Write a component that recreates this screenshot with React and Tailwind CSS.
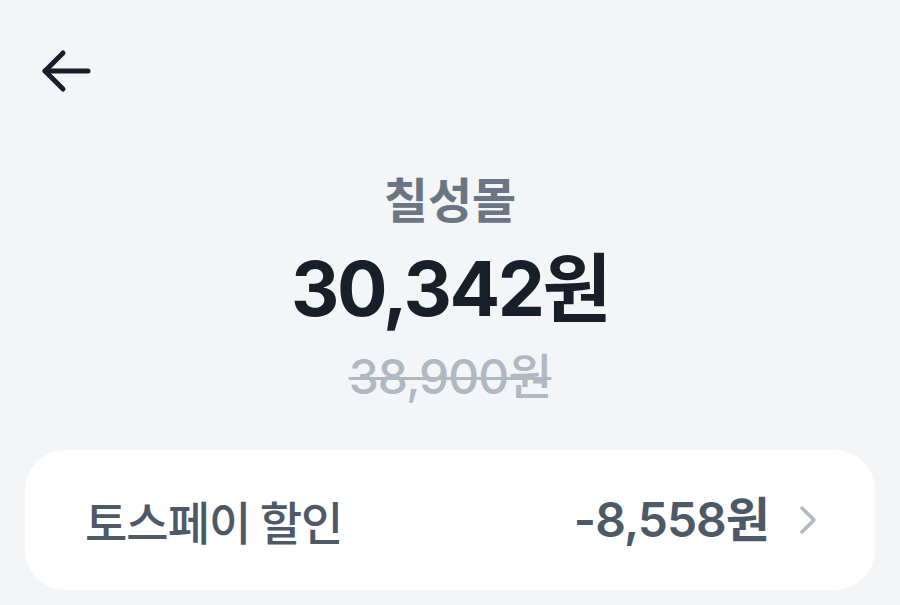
export default function App() {
  return (
    <div
      className="w-[900px] h-[605px] overflow-hidden bg-[#f4f5f7] flex flex-col"
      style={{ fontFamily: 'Inter, "Noto Sans CJK KR", sans-serif' }}
    >
      <div className="h-[167px] pl-[40px] pt-[48px] shrink-0">
        <svg width="52" height="46" viewBox="0 0 52 46" fill="none" stroke="#191f28" strokeWidth="5" strokeLinecap="round" strokeLinejoin="round">
          <path d="M48 23H5" />
          <path d="M23 5L5 23L23 41" />
        </svg>
      </div>
      <div className="flex flex-col items-center">
        <div className="text-[48px] leading-[60px] font-semibold text-[#6b7684]" style={{ fontFamily: '"Noto Sans CJK KR", sans-serif' }}>칠성몰</div>
        <div className="mt-[20px] text-[75px] leading-[84px] font-bold text-[#191f28] tracking-[-2.5px]">30,342원</div>
        <div className="mt-[18px] text-[48px] leading-[56px] font-medium text-[#b0b8c1] line-through decoration-[3px] tracking-[-1px]">38,900원</div>
      </div>
      <div className="mt-[45px] mx-[25px] h-[140px] shrink-0 bg-white rounded-[40px] flex items-center pl-[60px] pr-[58px]">
        <div className="text-[46px] font-medium text-[#4e5968] tracking-[-1px] flex-1" style={{ fontFamily: '"Noto Sans CJK KR", sans-serif' }}>토스페이 할인</div>
        <div className="text-[48px] font-semibold text-[#4e5968] tracking-[-1px]">-8,558원</div>
        <svg className="ml-[30px]" width="18" height="30" viewBox="0 0 18 30" fill="none" stroke="#b0b8c1" strokeWidth="3.5" strokeLinecap="round" strokeLinejoin="round">
          <path d="M3 3L15 15L3 27" />
        </svg>
      </div>
    </div>
  );
}
